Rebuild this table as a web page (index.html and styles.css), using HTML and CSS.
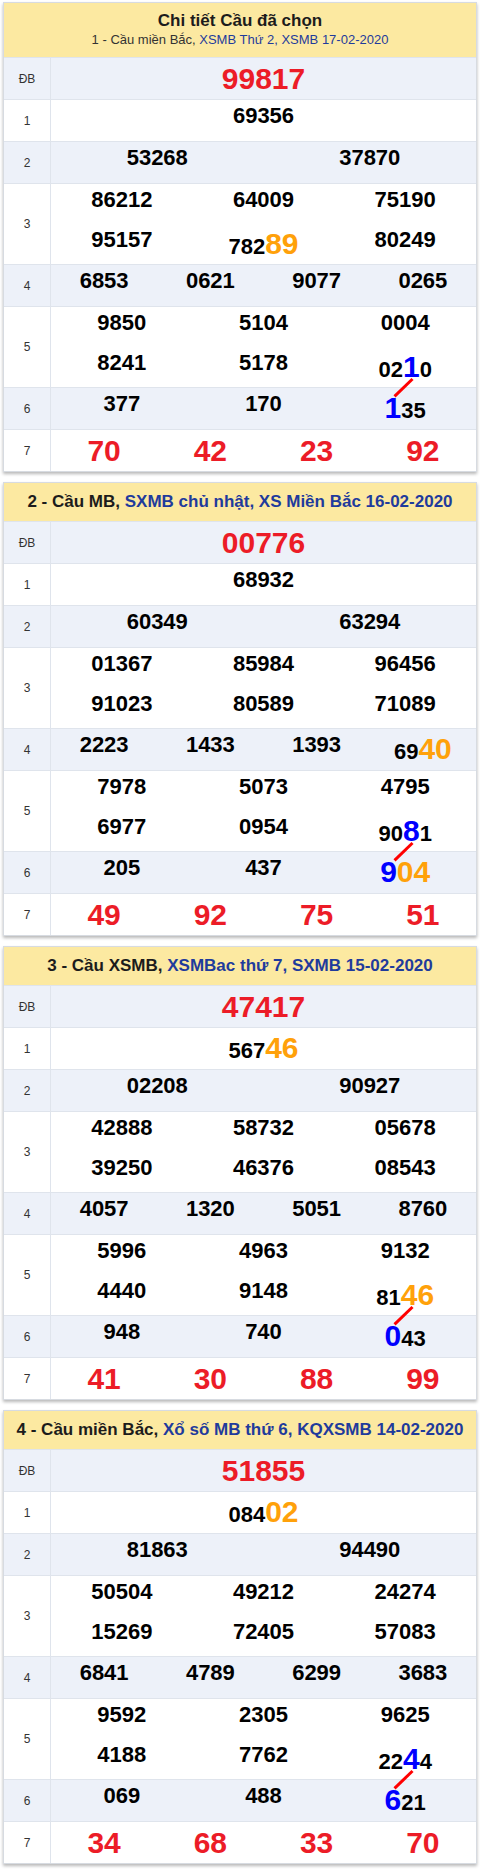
FILE: index.html
```html
<!DOCTYPE html>
<html lang="vi">
<head>
<meta charset="utf-8">
<title>Chi tiết Cầu đã chọn</title>
<link rel="stylesheet" href="styles.css">
</head>
<body>

<section class="card">
  <header class="head head--two">
    <h2 class="title">Chi tiết Cầu đã chọn</h2>
    <p class="sub">1 - Cầu miền Bắc, <span class="lnk">XSMB Thứ 2, XSMB 17-02-2020</span></p>
  </header>
  <div class="row alt"><div class="lbl">ĐB</div><div class="vals g1"><span class="n big red">99817</span></div></div>
  <div class="row"><div class="lbl">1</div><div class="vals g1"><span class="n">69356</span></div></div>
  <div class="row alt"><div class="lbl">2</div><div class="vals g2"><span class="n">53268</span><span class="n">37870</span></div></div>
  <div class="row two"><div class="lbl">3</div><div class="vals g3"><span class="n">86212</span><span class="n">64009</span><span class="n">75190</span><span class="n">95157</span><span class="n hl">782<span class="hi or">89</span></span><span class="n">80249</span></div></div>
  <div class="row alt"><div class="lbl">4</div><div class="vals g4"><span class="n">6853</span><span class="n">0621</span><span class="n">9077</span><span class="n">0265</span></div></div>
  <div class="row two"><div class="lbl">5</div><div class="vals g3"><span class="n">9850</span><span class="n">5104</span><span class="n">0004</span><span class="n">8241</span><span class="n">5178</span><span class="n hl from">02<span class="hi bl">1</span>0</span></div></div>
  <div class="row alt"><div class="lbl">6</div><div class="vals g3"><span class="n">377</span><span class="n">170</span><span class="n hl"><span class="hi bl">1</span>35</span></div></div>
  <div class="row"><div class="lbl">7</div><div class="vals g4"><span class="n big red">70</span><span class="n big red">42</span><span class="n big red">23</span><span class="n big red">92</span></div></div>
</section>

<section class="card">
  <header class="head">2 - Cầu MB, <span class="lnk">SXMB chủ nhật, XS Miền Bắc 16-02-2020</span></header>
  <div class="row alt"><div class="lbl">ĐB</div><div class="vals g1"><span class="n big red">00776</span></div></div>
  <div class="row"><div class="lbl">1</div><div class="vals g1"><span class="n">68932</span></div></div>
  <div class="row alt"><div class="lbl">2</div><div class="vals g2"><span class="n">60349</span><span class="n">63294</span></div></div>
  <div class="row two"><div class="lbl">3</div><div class="vals g3"><span class="n">01367</span><span class="n">85984</span><span class="n">96456</span><span class="n">91023</span><span class="n">80589</span><span class="n">71089</span></div></div>
  <div class="row alt"><div class="lbl">4</div><div class="vals g4"><span class="n">2223</span><span class="n">1433</span><span class="n">1393</span><span class="n hl">69<span class="hi or">40</span></span></div></div>
  <div class="row two"><div class="lbl">5</div><div class="vals g3"><span class="n">7978</span><span class="n">5073</span><span class="n">4795</span><span class="n">6977</span><span class="n">0954</span><span class="n hl from">90<span class="hi bl">8</span>1</span></div></div>
  <div class="row alt"><div class="lbl">6</div><div class="vals g3"><span class="n">205</span><span class="n">437</span><span class="n hl"><span class="hi bl">9</span><span class="hi or">04</span></span></div></div>
  <div class="row"><div class="lbl">7</div><div class="vals g4"><span class="n big red">49</span><span class="n big red">92</span><span class="n big red">75</span><span class="n big red">51</span></div></div>
</section>

<section class="card">
  <header class="head">3 - Cầu XSMB, <span class="lnk">XSMBac thứ 7, SXMB 15-02-2020</span></header>
  <div class="row alt"><div class="lbl">ĐB</div><div class="vals g1"><span class="n big red">47417</span></div></div>
  <div class="row"><div class="lbl">1</div><div class="vals g1"><span class="n hl">567<span class="hi or">46</span></span></div></div>
  <div class="row alt"><div class="lbl">2</div><div class="vals g2"><span class="n">02208</span><span class="n">90927</span></div></div>
  <div class="row two"><div class="lbl">3</div><div class="vals g3"><span class="n">42888</span><span class="n">58732</span><span class="n">05678</span><span class="n">39250</span><span class="n">46376</span><span class="n">08543</span></div></div>
  <div class="row alt"><div class="lbl">4</div><div class="vals g4"><span class="n">4057</span><span class="n">1320</span><span class="n">5051</span><span class="n">8760</span></div></div>
  <div class="row two"><div class="lbl">5</div><div class="vals g3"><span class="n">5996</span><span class="n">4963</span><span class="n">9132</span><span class="n">4440</span><span class="n">9148</span><span class="n hl from">81<span class="hi or">46</span></span></div></div>
  <div class="row alt"><div class="lbl">6</div><div class="vals g3"><span class="n">948</span><span class="n">740</span><span class="n hl"><span class="hi bl">0</span>43</span></div></div>
  <div class="row"><div class="lbl">7</div><div class="vals g4"><span class="n big red">41</span><span class="n big red">30</span><span class="n big red">88</span><span class="n big red">99</span></div></div>
</section>

<section class="card">
  <header class="head">4 - Cầu miền Bắc, <span class="lnk">Xổ số MB thứ 6, KQXSMB 14-02-2020</span></header>
  <div class="row alt"><div class="lbl">ĐB</div><div class="vals g1"><span class="n big red">51855</span></div></div>
  <div class="row"><div class="lbl">1</div><div class="vals g1"><span class="n hl">084<span class="hi or">02</span></span></div></div>
  <div class="row alt"><div class="lbl">2</div><div class="vals g2"><span class="n">81863</span><span class="n">94490</span></div></div>
  <div class="row two"><div class="lbl">3</div><div class="vals g3"><span class="n">50504</span><span class="n">49212</span><span class="n">24274</span><span class="n">15269</span><span class="n">72405</span><span class="n">57083</span></div></div>
  <div class="row alt"><div class="lbl">4</div><div class="vals g4"><span class="n">6841</span><span class="n">4789</span><span class="n">6299</span><span class="n">3683</span></div></div>
  <div class="row two"><div class="lbl">5</div><div class="vals g3"><span class="n">9592</span><span class="n">2305</span><span class="n">9625</span><span class="n">4188</span><span class="n">7762</span><span class="n hl from">22<span class="hi bl">4</span>4</span></div></div>
  <div class="row alt"><div class="lbl">6</div><div class="vals g3"><span class="n">069</span><span class="n">488</span><span class="n hl"><span class="hi bl">6</span>21</span></div></div>
  <div class="row"><div class="lbl">7</div><div class="vals g4"><span class="n big red">34</span><span class="n big red">68</span><span class="n big red">33</span><span class="n big red">70</span></div></div>
</section>

</body>
</html>
```

FILE: styles.css
```css
* {
  box-sizing: border-box;
  margin: 0;
  padding: 0;
}

body {
  background: #fff;
  font-family: "Liberation Sans", Arial, sans-serif;
  color: #000;
  padding: 2px 3px 0;
}

.card {
  border: 1px solid #d7dbe1;
  box-shadow: 0 2px 3px rgba(0, 0, 0, 0.28);
  margin-bottom: 10px;
  background: #fff;
}

.head {
  background: #fce9a1;
  text-align: center;
  height: 38px;
  padding: 9px 4px;
  font-size: 17px;
  line-height: 20px;
  font-weight: bold;
  color: #1c1c1c;
  white-space: nowrap;
}

.head--two {
  height: 54px;
  padding: 8px 4px 0;
}

.title {
  font-size: 17px;
  line-height: 20px;
  font-weight: bold;
}

.sub {
  font-size: 13px;
  line-height: 18px;
  font-weight: normal;
  color: #333;
}

.lnk {
  color: #1f3b9c;
}

.row {
  display: flex;
  border-top: 1px solid #dfe4ec;
}

.row.alt {
  background: #edf1f9;
}

.lbl {
  flex: 0 0 47px;
  border-right: 1px solid #dfe4ec;
  display: flex;
  align-items: center;
  justify-content: center;
  font-size: 12px;
  color: #333;
}

.vals {
  flex: 1;
  display: grid;
}

.g1 { grid-template-columns: 1fr; }
.g2 { grid-template-columns: 1fr 1fr; }
.g3 { grid-template-columns: 1fr 1fr 1fr; }
.g4 { grid-template-columns: 1fr 1fr 1fr 1fr; }

.n {
  display: block;
  height: 41px;
  line-height: 32px;
  text-align: center;
  font-size: 22px;
  font-weight: bold;
  white-space: nowrap;
}

.row.two .n {
  height: 40px;
}

.n.big {
  font-size: 30px;
  line-height: 41px;
}

.red {
  color: #ec1c27;
}

.hl {
  padding-top: 7px;
}

.hi {
  font-size: 30px;
  line-height: 20px;
}

.or {
  color: #ffa10a;
}

.bl {
  color: #0000ff;
}

.from {
  position: relative;
}

.from::after {
  content: "";
  position: absolute;
  left: calc(50% + 6px);
  top: 32px;
  width: 3px;
  height: 25px;
  background: #ff0000;
  transform-origin: top center;
  transform: rotate(46deg);
}
```
